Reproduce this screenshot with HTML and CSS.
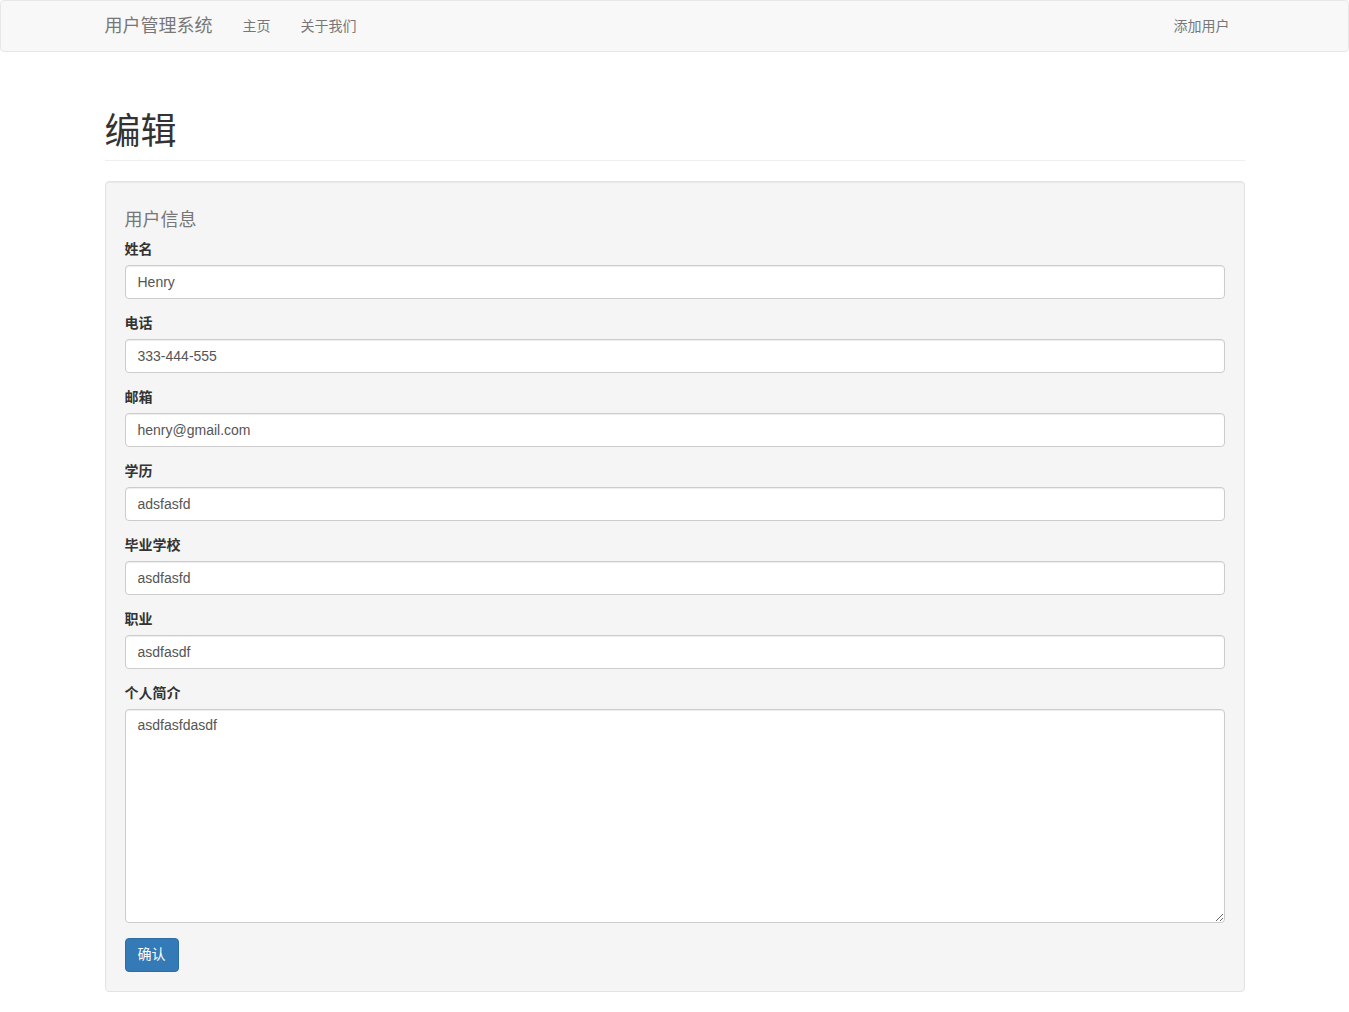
FILE: index.html
```html
<!DOCTYPE html>
<html lang="zh-CN">
<head>
    <meta charset="UTF-8">
    <title>编辑</title>
    <link rel="stylesheet" href="styles.css">
</head>
<body>
    <nav class="navbar">
        <div class="navbar-inner">
            <a class="brand" href="#">用户管理系统</a>
            <ul class="nav">
                <li><a href="#">主页</a></li>
                <li><a href="#">关于我们</a></li>
            </ul>
            <ul class="nav nav-right">
                <li><a href="#">添加用户</a></li>
            </ul>
        </div>
    </nav>

    <div class="container">
        <div class="page-header">
            <h1>编辑</h1>
        </div>

        <form class="well">
            <h4 class="legend">用户信息</h4>
            <div class="form-group">
                <label>姓名</label>
                <input class="form-control" type="text" value="Henry">
            </div>
            <div class="form-group">
                <label>电话</label>
                <input class="form-control" type="text" value="333-444-555">
            </div>
            <div class="form-group">
                <label>邮箱</label>
                <input class="form-control" type="text" value="henry@gmail.com">
            </div>
            <div class="form-group">
                <label>学历</label>
                <input class="form-control" type="text" value="adsfasfd">
            </div>
            <div class="form-group">
                <label>毕业学校</label>
                <input class="form-control" type="text" value="asdfasfd">
            </div>
            <div class="form-group">
                <label>职业</label>
                <input class="form-control" type="text" value="asdfasdf">
            </div>
            <div class="form-group">
                <label>个人简介</label>
                <textarea class="form-control" rows="10">asdfasfdasdf</textarea>
            </div>
            <button type="button" class="btn">确认</button>
        </form>
    </div>
</body>
</html>
```

FILE: styles.css
```css
* {
    box-sizing: border-box;
}
body {
    margin: 0;
    font-family: "Liberation Sans", "Noto Sans CJK SC", sans-serif;
    font-size: 14px;
    line-height: 1.42857;
    color: #333;
    background: #fff;
}
a {
    text-decoration: none;
}

/* navbar */
.navbar {
    background: #f8f8f8;
    border: 1px solid #e7e7e7;
    border-radius: 4px;
    min-height: 50px;
}
.navbar-inner {
    width: 1170px;
    margin: 0 auto;
    padding: 0 15px;
    display: flex;
    align-items: flex-start;
}
.brand {
    font-size: 18px;
    line-height: 20px;
    padding: 15px 15px 15px 0;
    color: #777;
    height: 50px;
}
.nav {
    display: flex;
    list-style: none;
    margin: 0;
    padding: 0;
}
.nav a {
    display: block;
    padding: 15px;
    line-height: 20px;
    color: #777;
}
.nav-right {
    margin-left: auto;
}

/* content */
.container {
    width: 1170px;
    margin: 0 auto;
    padding: 0 15px;
}
.page-header {
    margin: 60px 0 20px;
    padding-bottom: 8px;
    border-bottom: 1px solid #eee;
}
.page-header h1 {
    margin: 0;
    font-size: 36px;
    font-weight: normal;
    line-height: 1.1;
}
.well {
    background: #f5f5f5;
    border: 1px solid #e3e3e3;
    border-radius: 4px;
    padding: 19px;
    box-shadow: inset 0 1px 1px rgba(0,0,0,0.05);
    margin-bottom: 20px;
}
.legend {
    margin: 10px 0;
    font-size: 18px;
    font-weight: normal;
    line-height: 1.1;
    color: #777;
}
.form-group {
    margin-bottom: 15px;
}
.form-group label {
    display: inline-block;
    margin-bottom: 5px;
    font-weight: bold;
}
.form-control {
    display: block;
    width: 100%;
    height: 34px;
    padding: 6px 12px;
    font-family: inherit;
    font-size: 14px;
    line-height: 1.42857;
    color: #555;
    background: #fff;
    border: 1px solid #ccc;
    border-radius: 4px;
    box-shadow: inset 0 1px 1px rgba(0,0,0,0.075);
}
textarea.form-control {
    height: auto;
    resize: vertical;
}
.btn {
    display: inline-block;
    padding: 6px 12px;
    font-family: inherit;
    font-size: 14px;
    line-height: 1.42857;
    color: #fff;
    background: #337ab7;
    border: 1px solid #2e6da4;
    border-radius: 4px;
    cursor: pointer;
}
.btn:hover {
    background: #286090;
}
```
